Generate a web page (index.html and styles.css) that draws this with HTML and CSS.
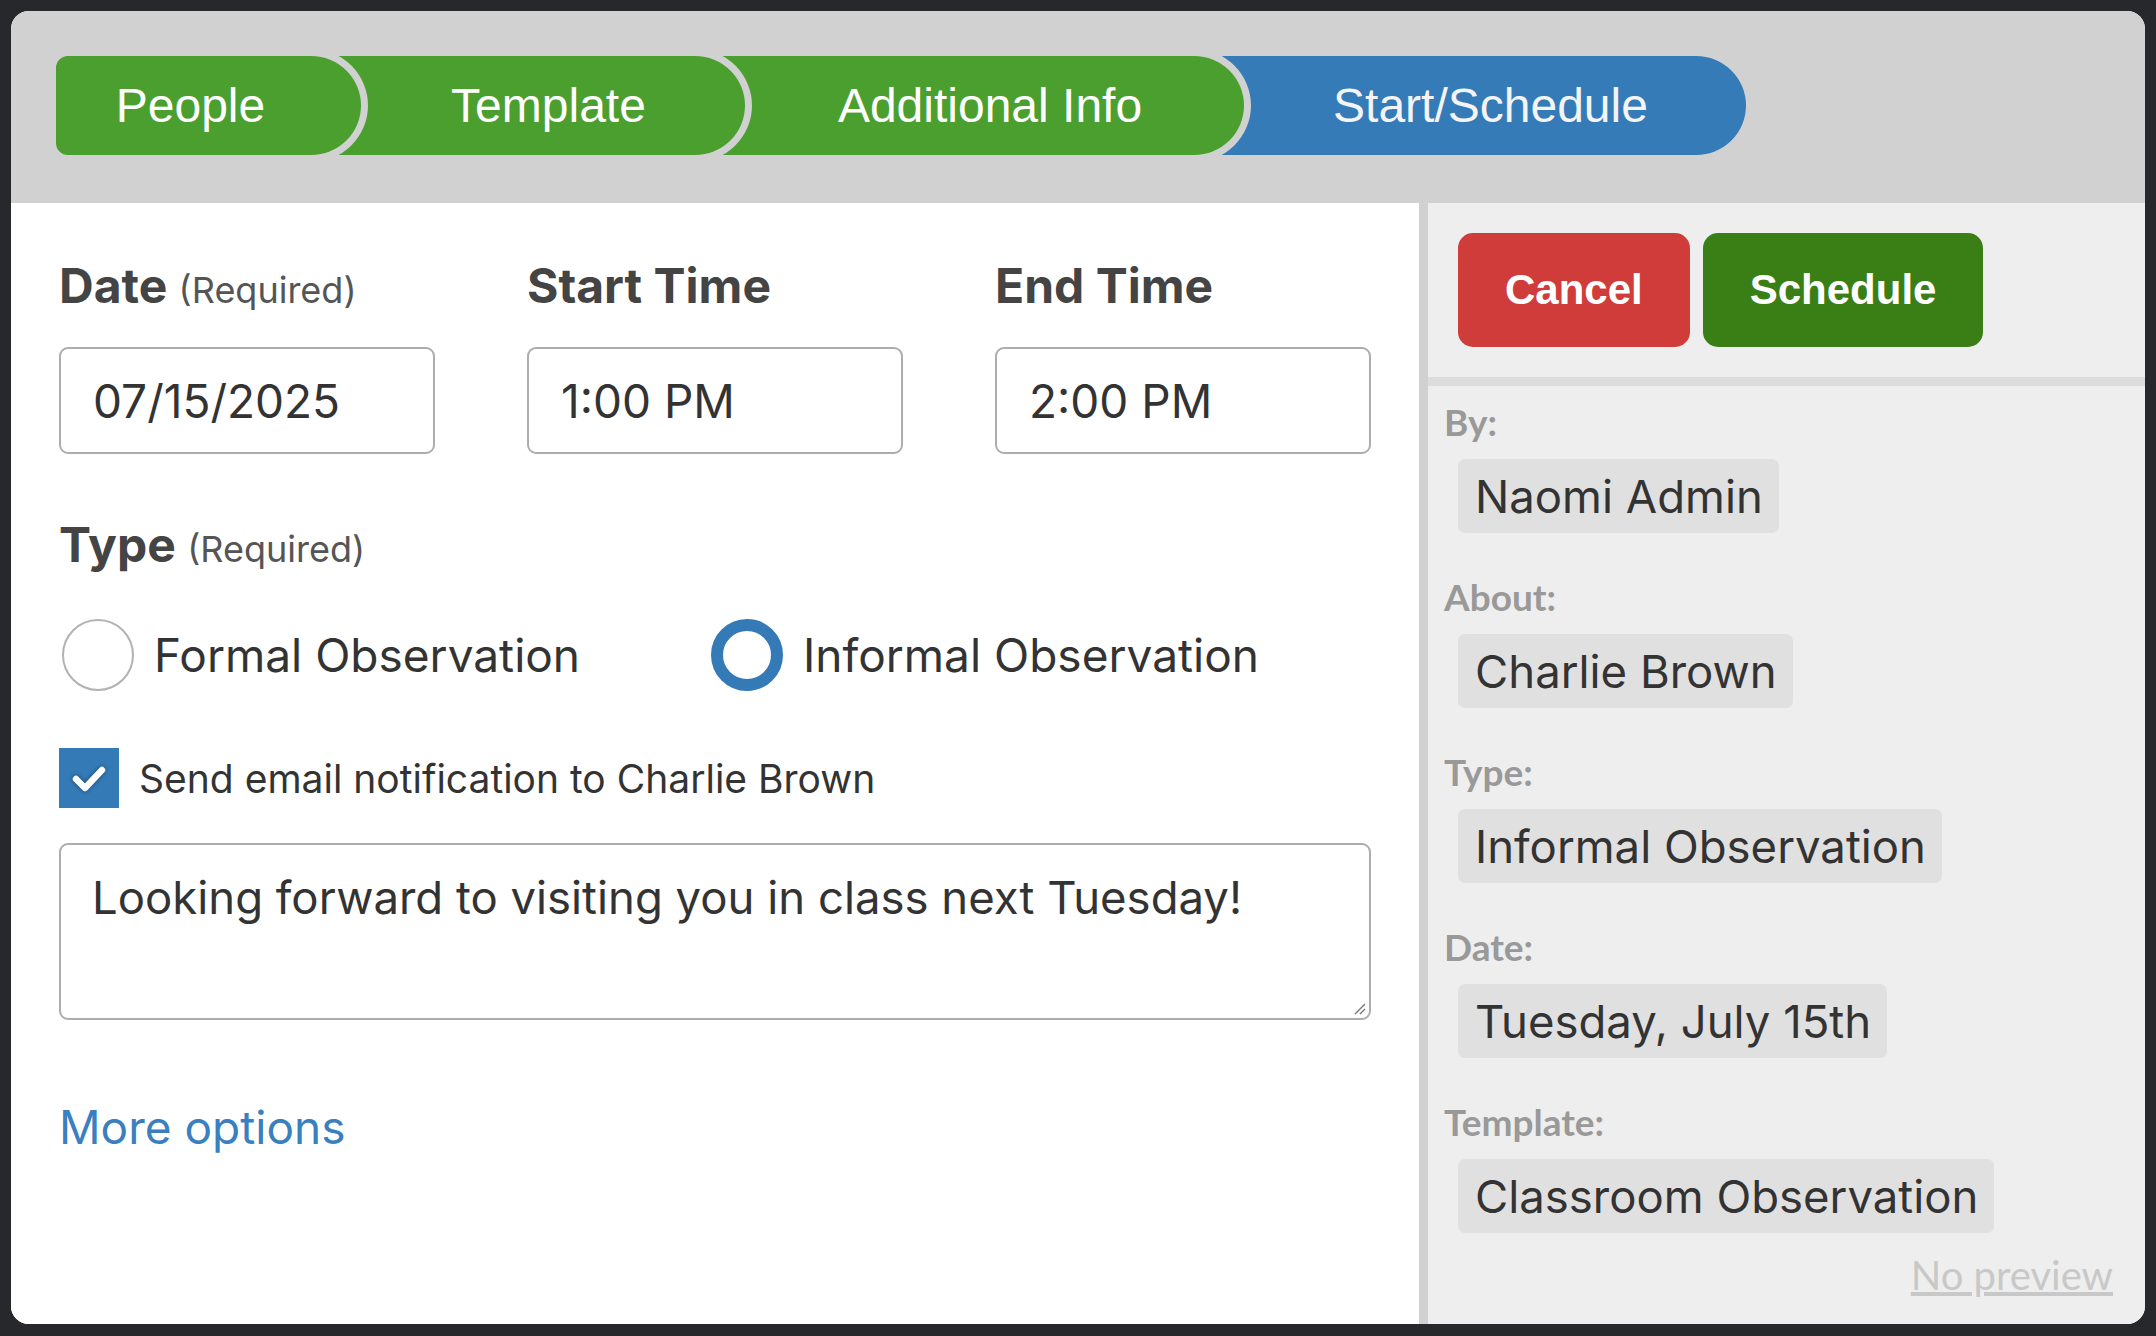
FILE: index.html
```html
<!DOCTYPE html>
<html lang="en">
<head>
<meta charset="utf-8">
<title>Start/Schedule</title>
<link rel="stylesheet" href="styles.css">
</head>
<body>
<div class="card">
  <header class="header">
    <nav class="steps">
      <div class="step done s1">People</div>
      <div class="step done s2">Template</div>
      <div class="step done s3">Additional Info</div>
      <div class="step current s4">Start/Schedule</div>
    </nav>
  </header>
  <div class="body">
    <section class="form">
      <div class="fields">
        <div class="field">
          <div class="label">Date <span class="req">(Required)</span></div>
          <div class="input">07/15/2025</div>
        </div>
        <div class="field">
          <div class="label">Start Time</div>
          <div class="input">1:00 PM</div>
        </div>
        <div class="field">
          <div class="label">End Time</div>
          <div class="input">2:00 PM</div>
        </div>
      </div>
      <div class="label type-label">Type <span class="req">(Required)</span></div>
      <div class="radios">
        <div class="radio-opt first"><span class="radio"></span><span class="opt-text">Formal Observation</span></div>
        <div class="radio-opt"><span class="radio checked"></span><span class="opt-text">Informal Observation</span></div>
      </div>
      <div class="check-row">
        <span class="checkbox"><svg viewBox="0 0 60 60" width="60" height="60"><path d="M17 31 L26 40 L43 22" fill="none" stroke="#fff" stroke-width="6.5" stroke-linecap="round" stroke-linejoin="round"/></svg></span>
        <span class="check-text">Send email notification to Charlie Brown</span>
      </div>
      <div class="textarea">Looking forward to visiting you in class next Tuesday!<svg class="grip" viewBox="0 0 14 14" width="14" height="14"><path d="M13 3 L3 13 M13 8 L8 13" stroke="#777" stroke-width="1.4" fill="none"/></svg></div>
      <a class="more" href="#">More options</a>
    </section>
    <aside class="summary">
      <div class="actions">
        <button class="btn cancel">Cancel</button>
        <button class="btn schedule">Schedule</button>
      </div>
      <div class="details">
        <div class="item">
          <div class="k">By:</div>
          <div class="v">Naomi Admin</div>
        </div>
        <div class="item">
          <div class="k">About:</div>
          <div class="v">Charlie Brown</div>
        </div>
        <div class="item">
          <div class="k">Type:</div>
          <div class="v">Informal Observation</div>
        </div>
        <div class="item">
          <div class="k">Date:</div>
          <div class="v">Tuesday, July 15th</div>
        </div>
        <div class="item last">
          <div class="k">Template:</div>
          <div class="v">Classroom Observation</div>
        </div>
        <div class="preview"><a href="#">No preview</a></div>
      </div>
    </aside>
  </div>
</div>
</body>
</html>
```
FILE: styles.css
```css
* { box-sizing: border-box; }
html, body { margin: 0; padding: 0; }
body {
  background: #26282c;
  width: 2156px;
  height: 1336px;
  overflow: hidden;
  font-family: Inter, "Noto Sans", sans-serif;
}
.card {
  margin: 11px;
  width: 2134px;
  height: 1313px;
  border-radius: 18px;
  overflow: hidden;
  display: flex;
  flex-direction: column;
  background: #fff;
}
.header {
  height: 192px;
  flex: none;
  background: #d1d1d1;
  padding: 45px 0 0 45px;
}
.steps { display: flex; }
.step {
  position: relative;
  height: 99px;
  display: flex;
  align-items: center;
  justify-content: center;
  color: #fff;
  font-family: "Liberation Sans", Arial, sans-serif;
  font-size: 48px;
  padding: 0 97px 0 128px;
  margin-left: -40px;
  border-radius: 12px 50px 50px 12px / 12px 50% 50% 12px;
  box-shadow: 0 0 0 7px #d1d1d1;
  white-space: nowrap;
}
.step.done { background: #4a9f2f; }
.step.current { background: #347bb8; color: #f4f4f4; }
.s1 { width: 305px; margin-left: 0; padding-left: 61px; z-index: 4; }
.s2 { width: 424px; z-index: 3; }
.s3 { width: 539px; z-index: 2; }
.s4 { width: 542px; z-index: 1; }

.body { flex: 1; display: flex; min-height: 0; }
.form {
  width: 1408px;
  flex: none;
  background: #fff;
  padding: 54.5px 48px 0 48px;
}
.fields {
  display: grid;
  grid-template-columns: 376px 376px 376px;
  column-gap: 92px;
}
.label {
  font-weight: 700;
  font-size: 48px;
  line-height: 56px;
  color: #444;
  white-space: nowrap;
}
.req {
  font-weight: 400;
  font-size: 36px;
  line-height: 1;
  color: #555;
}
.input {
  margin-top: 33.5px;
  height: 107px;
  border: 2px solid #adadad;
  border-radius: 9px;
  padding-left: 32px;
  display: flex;
  align-items: center;
  font-size: 46px;
  color: #333;
}
.type-label { margin-top: 62.5px; }
.radios {
  margin-top: 46.5px;
  display: flex;
  padding-left: 3px;
}
.radio-opt {
  display: flex;
  align-items: center;
  gap: 20px;
  font-size: 46px;
  color: #333;
}
.radio-opt.first { width: 649px; }
.radio {
  width: 72px;
  height: 72px;
  border-radius: 50%;
  border: 2.5px solid #b2b2b2;
  background: #fff;
  flex: none;
}
.radio.checked { border: 12px solid #337ab7; }
.check-row {
  margin-top: 57px;
  display: flex;
  align-items: center;
  gap: 20px;
}
.checkbox {
  width: 60px;
  height: 60px;
  background: #337ab7;
  flex: none;
  display: block;
}
.checkbox svg { display: block; filter: drop-shadow(0 0 2px rgba(0,0,0,0.45)); }
.check-text { font-size: 39px; color: #333; }
.textarea {
  position: relative;
  margin-top: 35px;
  height: 177px;
  border: 2px solid #adadad;
  border-radius: 9px;
  padding: 24px 0 0 31px;
  font-size: 45.5px;
  line-height: 58px;
  color: #333;
}
.grip { position: absolute; right: 3px; bottom: 3px; }
.more {
  display: inline-block;
  margin-top: 80px;
  font-size: 46px;
  line-height: 54px;
  color: #3a7fc0;
  text-decoration: none;
}

.summary {
  flex: 1;
  background: #eeeeee;
  border-left: 9px solid #d1d1d1;
  display: flex;
  flex-direction: column;
}
.actions {
  display: flex;
  gap: 13px;
  padding: 30px 30px;
  border-bottom: 9px solid #dcdcdc;
}
.btn {
  height: 114px;
  padding: 0 47px;
  border: none;
  border-radius: 15px;
  color: #fff;
  font-family: "Liberation Sans", Arial, sans-serif;
  font-weight: 700;
  font-size: 42px;
}
.cancel { background: #d03c39; }
.schedule { background: #3a7f16; }
.details { padding: 15px 32px 0 16px; }
.item { margin-bottom: 43px; }
.item.last { margin-bottom: 0; }
.k {
  font-family: Lato, "Liberation Sans", sans-serif;
  font-weight: 700;
  font-size: 37px;
  line-height: 42px;
  color: #999;
}
.v {
  display: flex;
  width: fit-content;
  align-items: center;
  margin: 16px 0 0 14px;
  height: 74px;
  padding: 0 16px 0 17px;
  background: #e0e0e0;
  border-radius: 7px;
  font-size: 45.5px;
  color: #333;
}
.preview {
  margin-top: 21px;
  text-align: right;
  font-family: Lato, "Liberation Sans", sans-serif;
  font-size: 40px;
  line-height: 42px;
}
.preview a { color: #c8c8c8; text-decoration: underline; }
```
